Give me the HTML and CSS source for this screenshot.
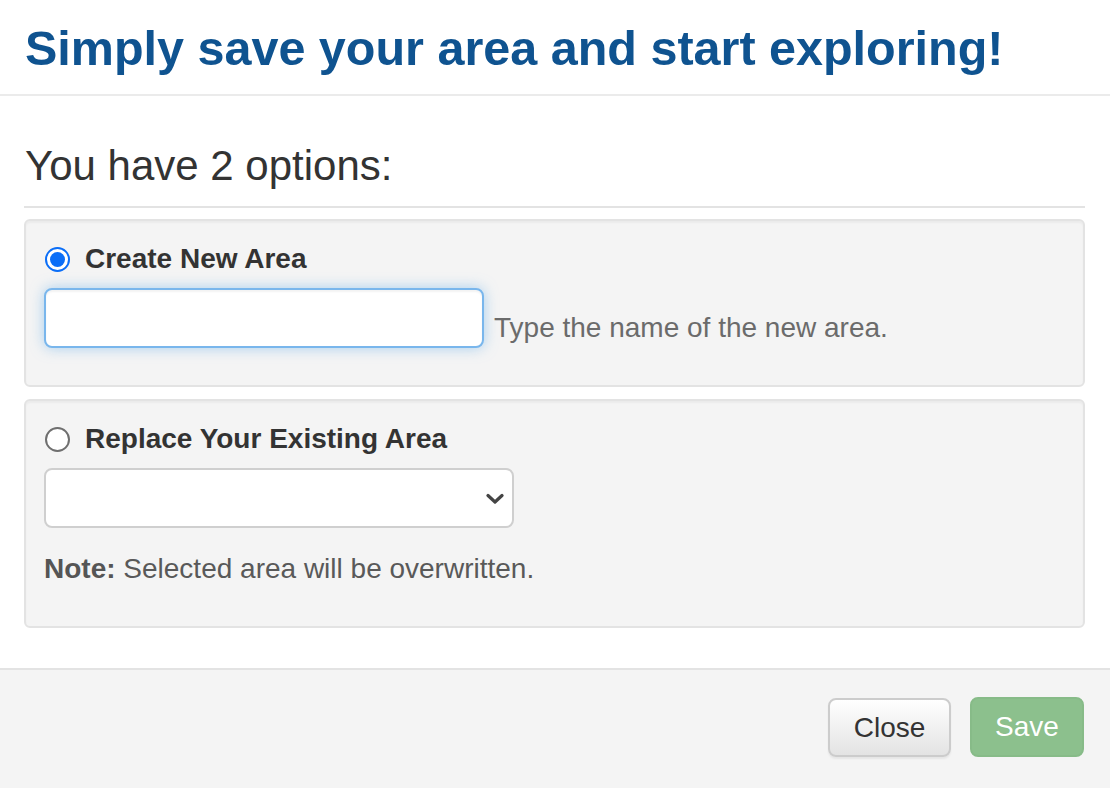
FILE: index.html
```html
<!DOCTYPE html>
<html>
<head>
<meta charset="utf-8">
<title>Save area</title>
<link rel="stylesheet" href="styles.css">
</head>
<body>
<div class="modal">
  <div class="modal-header">
    <h1 class="modal-title">Simply save your area and start exploring!</h1>
  </div>
  <div class="modal-body">
    <h2 class="options-title">You have 2 options:</h2>
    <hr class="divider">
    <div class="well">
      <label class="radio-row">
        <span class="radio checked"><span class="radio-dot"></span></span>
        <span class="radio-label">Create New Area</span>
      </label>
      <div class="field-row">
        <div class="text-input"></div>
        <span class="help">Type the name of the new area.</span>
      </div>
    </div>
    <div class="well">
      <label class="radio-row">
        <span class="radio"></span>
        <span class="radio-label">Replace Your Existing Area</span>
      </label>
      <div class="select">
        <svg class="chevron" width="18" height="12" viewBox="0 0 18 12"><path d="M2 2.5 L9 9 L16 2.5" fill="none" stroke="#444" stroke-width="3.2" stroke-linecap="round" stroke-linejoin="round"/></svg>
      </div>
      <p class="note"><b>Note:</b> Selected area will be overwritten.</p>
    </div>
  </div>
  <div class="modal-footer">
    <button class="btn btn-default">Close</button>
    <button class="btn btn-success">Save</button>
  </div>
</div>
</body>
</html>
```
FILE: styles.css
```css
* { box-sizing: border-box; }
html, body {
  margin: 0;
  padding: 0;
  background: #ffffff;
  font-family: "Liberation Sans", Arial, Helvetica, sans-serif;
  color: #333333;
}
.modal {
  width: 1110px;
  height: 788px;
  display: flex;
  flex-direction: column;
}
.modal-header {
  padding: 20px 25px 18px;
  border-bottom: 2px solid #ebebeb;
}
.modal-title {
  margin: 0;
  font-size: 48.5px;
  line-height: 56px;
  font-weight: bold;
  color: #0f5390;
}
.modal-body {
  padding: 0 25px 0 24px;
  flex: 1;
}
.options-title {
  margin: 47px 0 0 1px;
  font-size: 42px;
  line-height: 46px;
  font-weight: normal;
  color: #333333;
}
.divider {
  margin: 17px 0 0;
  border: 0;
  border-top: 2px solid #e3e3e3;
  height: 0;
}
.well {
  margin-top: 11px;
  background: #f4f4f4;
  border: 2px solid #e3e3e3;
  border-radius: 6px;
  box-shadow: inset 0 2px 2px rgba(0,0,0,0.04);
  padding: 18px 18px 37px;
}
.well + .well { margin-top: 12px; }
.radio-row {
  display: flex;
  align-items: center;
  height: 40px;
  gap: 15px;
  padding-left: 1px;
}
.radio {
  width: 25px;
  height: 25px;
  border-radius: 50%;
  border: 2px solid #6f6f6f;
  background: #ffffff;
  display: flex;
  align-items: center;
  justify-content: center;
  flex: none;
}
.radio.checked {
  border-color: #0b6ef7;
}
.radio-dot {
  width: 15px;
  height: 15px;
  border-radius: 50%;
  background: #0b6ef7;
}
.radio-label {
  font-size: 28px;
  line-height: 40px;
  font-weight: bold;
  color: #333333;
}
.field-row {
  display: flex;
  align-items: flex-end;
  margin-top: 9px;
}
.text-input {
  width: 440px;
  height: 60px;
  background: #ffffff;
  border: 2px solid #79b6ec;
  border-radius: 8px;
  box-shadow: inset 0 2px 2px rgba(0,0,0,0.05), 0 0 14px rgba(102,175,233,0.55);
}
.help {
  margin-left: 10px;
  font-size: 28px;
  line-height: 40px;
  color: #6b6b6b;
}
.select {
  margin-top: 9px;
  width: 470px;
  height: 60px;
  background: #ffffff;
  border: 2px solid #cfcfcf;
  border-radius: 8px;
  display: flex;
  align-items: center;
  justify-content: flex-end;
  padding-right: 8px;
}
.chevron { display: block; margin-top: 2px; }
.note {
  margin: 21px 0 0;
  font-size: 28px;
  line-height: 40px;
  color: #595959;
}
.note b { color: #555555; }
.modal-footer {
  height: 120px;
  border-top: 2px solid #e3e3e3;
  background: #f4f4f4;
  display: flex;
  justify-content: flex-end;
  align-items: flex-start;
  padding: 28px 26px 0 0;
  gap: 19px;
}
.btn {
  font-family: "Liberation Sans", Arial, Helvetica, sans-serif;
  font-size: 28px;
  height: 59px;
  border-radius: 8px;
  padding: 0;
  cursor: pointer;
}
.btn-default {
  width: 123px;
  color: #333333;
  border: 2px solid #cccccc;
  background: linear-gradient(to bottom, #ffffff 0%, #e3e3e3 100%);
  box-shadow: 0 2px 2px rgba(0,0,0,0.06);
}
.btn-success {
  width: 114px;
  height: 60px;
  margin-top: -1px;
  color: #ffffff;
  border: 2px solid #87bb88;
  background: #8cc08d;
}
```
